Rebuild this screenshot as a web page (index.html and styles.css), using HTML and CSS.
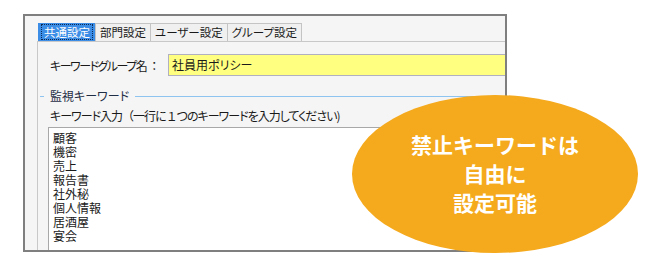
FILE: index.html
```html
<!DOCTYPE html>
<html>
<head>
  <title>キーワード設定</title>
  <link rel="stylesheet" href="styles.css">
</head>
<body>
  <div class="frame">
    <div class="tabs">
      <div class="tab active"><span>共通設定</span></div>
      <div class="tab">部門設定</div>
      <div class="tab">ユーザー設定</div>
      <div class="tab">グループ設定</div>
    </div>
    <div class="panel">
      <div class="row">
        <label class="label">キーワードグループ名<span class="colon">：</span></label>
        <div class="name-input">社員用ポリシー</div>
      </div>
      <div class="group-head">
        <span class="rule-short"></span>
        <span class="legend">監視キーワード</span>
        <span class="rule-long"></span>
      </div>
      <div class="hint">キーワード入力<span class="wide">（</span>一行に<span class="wide">１</span>つのキーワードを入力してください)</div>
      <div class="keywords">
        <div>顧客</div>
        <div>機密</div>
        <div>売上</div>
        <div>報告書</div>
        <div>社外秘</div>
        <div>個人情報</div>
        <div>居酒屋</div>
        <div>宴会</div>
      </div>
    </div>
  </div>
  <div class="bubble">
    禁止キーワードは<br>
    自由に<br>
    設定可能
  </div>
</body>
</html>
```

FILE: styles.css
```css
body {
  margin: 0;
  background-color: #ffffff;
  font-family: "Noto Sans CJK JP", "Noto Sans", sans-serif;
  position: relative;
  width: 647px;
  height: 263px;
  overflow: hidden;
}
.frame {
  margin: 14px 0 0 23px;
  width: 468px;
  height: 227px;
  border: 2px solid #7f7f7f;
  background-color: #f5f5f5;
  overflow: hidden;
  padding: 7px 0 0 12px;
  box-sizing: content-box;
}
.tabs {
  display: flex;
  height: 18px;
  margin-left: 1px;
}
.tab {
  font-size: 11.5px;
  line-height: 16px;
  color: #1a1a1a;
  font-feature-settings: "palt";
  background-color: #f0f0f0;
  border: 1px solid #c4c4c4;
  border-bottom: none;
  padding: 0 4px;
  margin-right: -1px;
}
.tab.active {
  background-color: #3b8de6;
  color: #ffffff;
  border-color: #3b8de6;
  padding: 0 2px;
}
.tab.active span {
  display: block;
  border: 1px dotted #0d2a55;
  line-height: 14px;
  padding: 0 2px;
}
.panel {
  border-top: 1px solid #c8c8c8;
  border-left: 1px solid #c8c8c8;
  width: 600px;
  height: 220px;
  padding-left: 10px;
  font-size: 12px;
  color: #1a1a1a;
  font-feature-settings: "palt";
}
.row {
  display: flex;
  align-items: center;
  margin-top: 12px;
  height: 22px;
}
.label {
  padding-left: 2px;
  width: 118px;
  flex: none;
  white-space: nowrap;
  letter-spacing: -1.5px;
}
.colon {
  font-feature-settings: normal;
  letter-spacing: 0;
  margin-left: 2px;
}
.name-input {
  width: 400px;
  height: 20px;
  line-height: 20px;
  background-color: #ffff80;
  border-top: 1px solid #b0b0c0;
  border-bottom: 1px solid #b0b0c0;
  border-left: 1px solid #b0b0c0;
  padding-left: 3px;
}
.group-head {
  display: flex;
  align-items: center;
  height: 14px;
  margin: 13px 0 0 -8px;
}
.rule-short {
  width: 4px;
  height: 1px;
  background-color: #8ec4f0;
}
.legend {
  padding: 0 6px;
  line-height: 14px;
  color: #1f2d45;
}
.rule-long {
  flex: 1;
  height: 1px;
  background-color: #8ec4f0;
}
.hint {
  margin: 6px 0 0 2px;
  line-height: 14px;
  letter-spacing: -1px;
}
.wide {
  font-feature-settings: normal;
}
.keywords {
  margin-top: 4px;
  background-color: #ffffff;
  border: 1px solid #a8a8a8;
  height: 140px;
  padding: 3px 0 0 4px;
  line-height: 14px;
  font-feature-settings: normal;
}
.bubble {
  position: absolute;
  left: 352px;
  top: 95px;
  width: 286px;
  height: 158px;
  border-radius: 50%;
  background-color: #f5a91c;
  color: #ffffff;
  font-weight: bold;
  font-size: 21px;
  line-height: 29px;
  text-align: center;
  display: flex;
  align-items: center;
  justify-content: center;
  padding-bottom: 2px;
  box-sizing: border-box;
}
```
